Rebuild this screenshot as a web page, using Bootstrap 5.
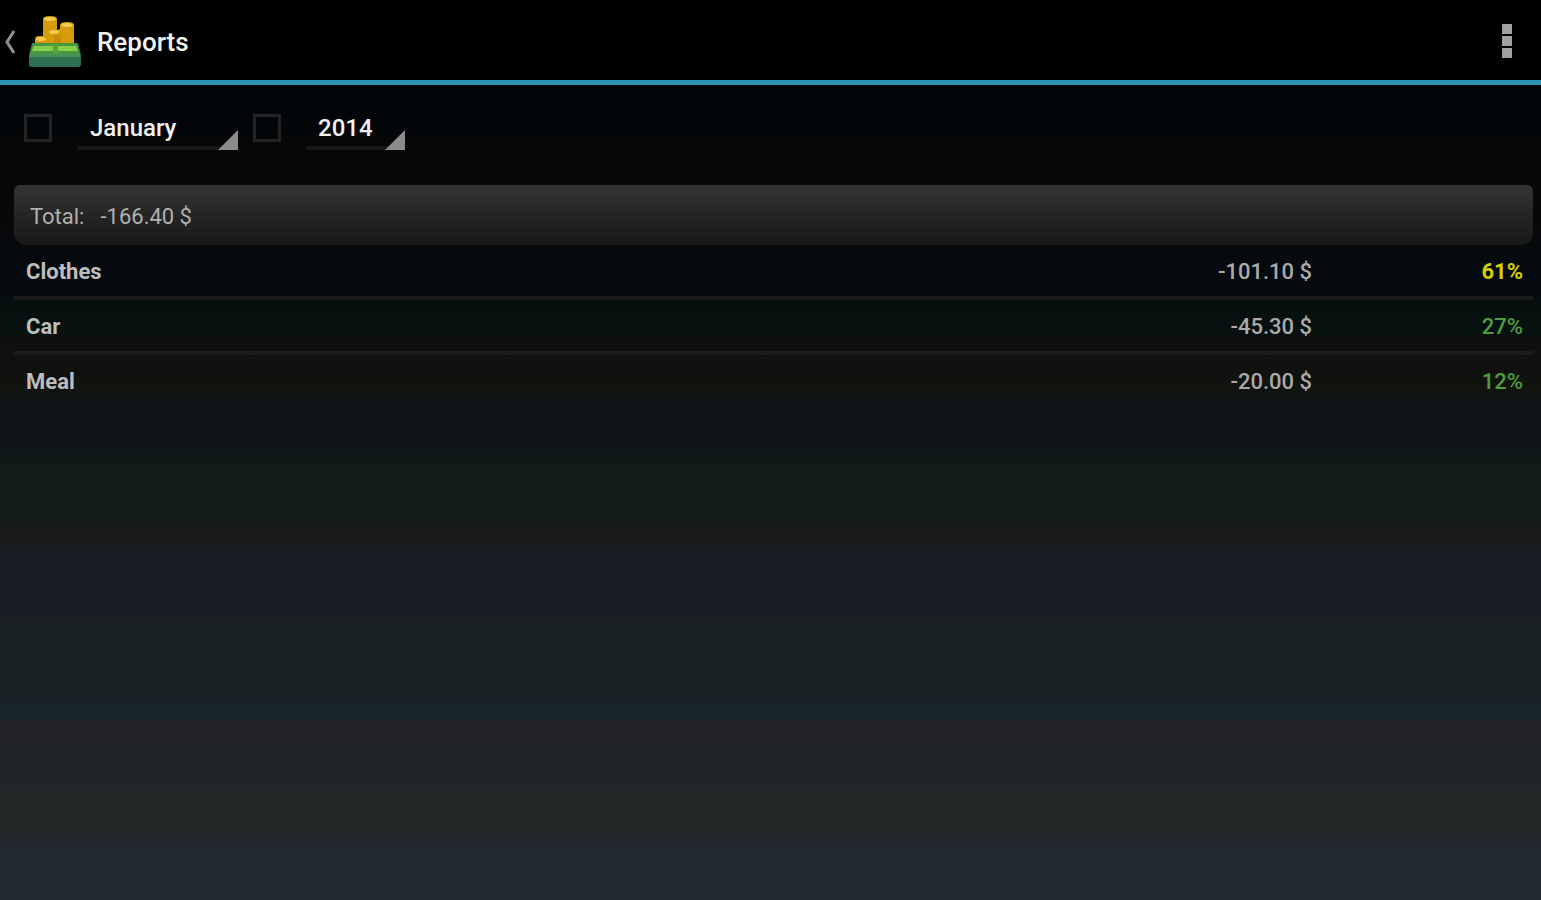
<!DOCTYPE html>
<html lang="en">
<head>
<meta charset="utf-8">
<meta name="viewport" content="width=device-width, initial-scale=1">
<title>Reports</title>
<link href="https://cdn.jsdelivr.net/npm/bootstrap@5.3.0/dist/css/bootstrap.min.css" rel="stylesheet">
<style>
  body {
    font-family: Roboto, "Liberation Sans", sans-serif;
    color: #bdbdbd;
    background: linear-gradient(to bottom,
      #000302 0, #00050a 12%, #070707 17%, #080808 24%,
      #060a0e 28%, #050a10 32%, #06100f 34%, #07110f 37%,
      #101010 38%, #11130f 43%, #101518 45%, #101518 49%,
      #101a17 52%, #101a17 58%, #1a1b18 59%, #1a1b19 60%,
      #1a1c24 61%, #1a1c24 68%, #1a2122 69%, #1a2122 77%,
      #17222b 78%, #17252b 80%, #232428 80%, #212529 87%,
      #222728 88%, #232829 93%, #212832 94%, #222b32 100%);
  }
  .action-bar { height: 85px; background: #000100; border-bottom: 5px solid #2f93b9; padding: 4px 20px 0 3px; }
  .up-link { color: #f4f4f4; font-size: 26px; font-weight: 500; line-height: 32px; }
  .app-icon { margin-left: 11px; margin-right: 15px; }
  .filter-bar { padding: 27px 24px 0; height: 100px; }
  .filter-bar .filter-check { width: 28px; height: 28px; margin: 2px 0 0; border: 3px solid #222423; border-radius: 0; background-color: transparent; }
  .spinner-box { height: 38px; border-bottom: 4px solid #151817; }
  .spinner-box::after { content: ""; position: absolute; right: 0; bottom: -4px; width: 20px; height: 20px; background: #8c8c8c; clip-path: polygon(100% 0, 100% 100%, 0 100%); pointer-events: none; }
  .spinner-select { appearance: none; border: 0; background: transparent; color: #f0f0f0; font-size: 24px; font-weight: 500; line-height: 32px; padding: 0 12px; width: 100%; }
  .spinner-select option { background: #222; }
  .month-box { width: 160px; margin-left: 26px; margin-right: 15px; }
  .year-box { width: 99px; margin-left: 25px; }
  .report { padding: 0 8px 0 14px; }
  .total-panel { height: 60px; padding: 2px 16px 0; gap: 16px; border-radius: 6px 6px 12px 12px; background: linear-gradient(#333433, #242524 50%, #181917); font-size: 22px; color: #b0b0b0; }
  .report-table { --bs-table-bg: transparent; --bs-table-color: #bdbdbd; font-size: 22px; line-height: 28px; }
  .report-table > tbody > tr > * { padding: 13px 10px 10px 12px; border-bottom: 4px solid #181d1c; }
  .report-table > tbody > tr:last-child > * { border-bottom: 0; }
  .amount-cell { font-weight: 500; color: #aaa; }
  .share-cell { width: 211px; font-weight: 500; }
  .share-high { color: #d6cf00 !important; font-weight: 700; }
  .share-low { color: #4f9d3e !important; }
</style>
</head>
<body class="min-vh-100">
<header class="action-bar d-flex align-items-center justify-content-between">
  <a href="#" class="up-link d-flex align-items-center text-decoration-none">
    <svg width="14" height="26" viewBox="0 0 14 26" fill="none" stroke="#929292" stroke-width="3" aria-hidden="true"><path d="M11 2 4 13l7 11"/></svg>
    <svg class="app-icon" width="54" height="54" viewBox="0 0 54 54" aria-hidden="true">
      <path d="M7 29v-5q0-3 4-3h4V4q0-3 7-3t7 3v11l3-1v-4q0-3 7-3t7 3v20H7z" fill="#d59b08"/>
      <path d="M26 20h7v9h-7z" fill="#c78b08"/>
      <ellipse cx="22" cy="4" rx="6" ry="2" fill="#f3cb52"/>
      <ellipse cx="39" cy="10" rx="6" ry="2" fill="#f3cb52"/>
      <ellipse cx="26" cy="17" rx="5" ry="2" fill="#f3cb52"/>
      <ellipse cx="13" cy="24" rx="5" ry="2" fill="#f3cb52"/>
      <path d="M4 28h46l3 12v9q0 3-3 3H4q-3 0-3-3v-9z" fill="#2c6f53"/>
      <path d="M5 28h44l3 11H2z" fill="#48973e"/>
      <path d="M6 31h19v5H4zm24 0h18l2 5H30z" fill="#89ce4b"/>
      <path d="M2 39h50v3H2z" fill="#47925c"/>
      <path d="M25 29h5v10h-5z" fill="#55a63f"/>
    </svg>
    <span>Reports</span>
  </a>
  <button type="button" class="btn border-0 p-2 d-flex" aria-label="More options">
    <svg width="12" height="38" viewBox="0 0 12 38" fill="#a0a0a0" aria-hidden="true"><path d="M1 1h10v10H1zM1 13h10v10H1zM1 25h10v10H1z"/></svg>
  </button>
</header>
<main>
  <form class="filter-bar d-flex align-items-start">
    <input type="checkbox" class="form-check-input filter-check flex-shrink-0" aria-label="Filter by month">
    <div class="spinner-box month-box position-relative">
      <select class="spinner-select" aria-label="Month"><option>January</option></select>
    </div>
    <input type="checkbox" class="form-check-input filter-check flex-shrink-0" aria-label="Filter by year">
    <div class="spinner-box year-box position-relative">
      <select class="spinner-select" aria-label="Year"><option>2014</option></select>
    </div>
  </form>
  <section class="report">
    <div class="total-panel d-flex align-items-center"><span>Total:</span><span>-166.40 $</span></div>
    <table class="table report-table mb-0">
      <tbody>
        <tr><th scope="row">Clothes</th><td class="amount-cell text-end">-101.10 $</td><td class="share-cell share-high text-end">61%</td></tr>
        <tr><th scope="row">Car</th><td class="amount-cell text-end">-45.30 $</td><td class="share-cell share-low text-end">27%</td></tr>
        <tr><th scope="row">Meal</th><td class="amount-cell text-end">-20.00 $</td><td class="share-cell share-low text-end">12%</td></tr>
      </tbody>
    </table>
  </section>
</main>
<script src="https://cdn.jsdelivr.net/npm/bootstrap@5.3.0/dist/js/bootstrap.bundle.min.js"></script>
</body>
</html>
